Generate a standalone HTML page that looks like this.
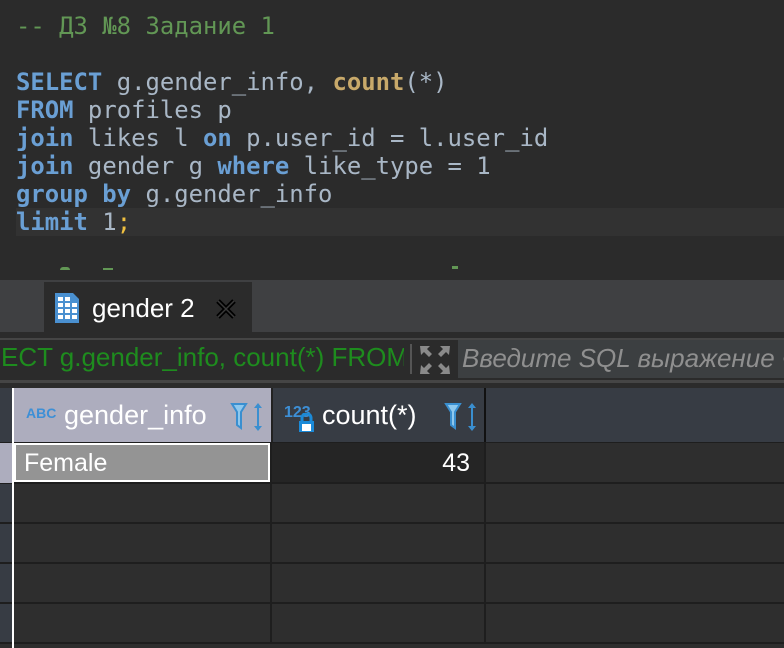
<!DOCTYPE html>
<html><head><meta charset="utf-8"><style>
*{margin:0;padding:0;box-sizing:border-box}
body{width:784px;height:648px;overflow:hidden;background:#2b2b2b;position:relative;font-family:"Liberation Sans","DejaVu Sans",sans-serif}
.abs{position:absolute}
.code{font-family:"DejaVu Sans Mono","Liberation Mono",monospace;font-size:23.9px;color:#a9b7c6;white-space:pre;left:16px;line-height:28px}
.k{color:#6a9fd4;font-weight:bold}
.c{color:#629755}
.f{color:#c8a96a;font-weight:bold}
.y{color:#f0c040}
</style></head><body>
<div class="abs" style="left:16px;top:208px;width:768px;height:28px;background:#323232"></div>
<div class="abs code" style="top:12px"><span class="c">-- ДЗ №8 Задание 1</span>

<span class="k">SELECT</span> g.gender_info, <span class="f">count</span>(*)
<span class="k">FROM</span> profiles p
<span class="k">join</span> likes l <span class="k">on</span> p.user_id = l.user_id
<span class="k">join</span> gender g <span class="k">where</span> like_type = 1
<span class="k">group by</span> g.gender_info
<span class="k">limit</span> 1<span class="y">;</span></div>
<div class="abs" style="left:60px;top:267px;width:10px;height:3px;background:#629755;border-radius:3px 3px 0 0"></div>
<div class="abs" style="left:103px;top:268px;width:10px;height:2px;background:#629755"></div>
<div class="abs" style="left:452px;top:266px;width:6px;height:3px;background:#629755"></div>
<!-- tab bar -->
<div class="abs" style="left:0;top:280px;width:784px;height:52px;background:#3f4042"></div>
<div class="abs" style="left:44px;top:282px;width:208px;height:50px;background:#2b2b2b"></div>
<svg class="abs" style="left:54px;top:292px" width="26" height="32" viewBox="0 0 26 32"><path d="M1 1h18l6 6v24H1z" fill="#4a90d0"/><g fill="#fff"><rect x="4" y="5" width="5" height="4"/><rect x="11" y="5" width="5" height="4"/><rect x="4" y="11" width="5" height="4"/><rect x="11" y="11" width="5" height="4"/><rect x="18" y="11" width="5" height="4"/><rect x="4" y="17" width="5" height="4"/><rect x="11" y="17" width="5" height="4"/><rect x="18" y="17" width="5" height="4"/><rect x="4" y="23" width="5" height="4"/><rect x="11" y="23" width="5" height="4"/><rect x="18" y="23" width="5" height="4"/></g></svg>
<div class="abs" style="left:92px;top:293px;font-size:26px;color:#fff">gender 2</div>
<svg class="abs" style="left:215px;top:298px" width="22" height="22" viewBox="0 0 22 22"><path d="M3 3l16 16M19 3L3 19" stroke="#000" stroke-width="5"/><path d="M3 3l16 16M19 3L3 19" stroke="#3a3a3a" stroke-width="1.5"/></svg>
<div class="abs" style="left:0;top:338px;width:784px;height:2px;background:#454545"></div>
<!-- filter bar -->
<div class="abs" style="left:0;top:342px;font-size:26px;color:#1e8c1e;white-space:nowrap;width:404px;overflow:hidden"><span style="margin-left:1px">ECT g.gender_info, count(*) FROM</span></div>
<div class="abs" style="left:410px;top:344px;width:2px;height:30px;background:#555"></div>
<svg class="abs" style="left:418px;top:344px" width="34" height="32" viewBox="0 0 34 32"><g fill="#8a8a8a"><path d="M2 2h10l-3 3 5 5-3 3-5-5-3 3z"/><path d="M32 2H22l3 3-5 5 3 3 5-5 3 3z"/><path d="M2 30h10l-3-3 5-5-3-3-5 5-3-3z"/><path d="M32 30H22l3-3-5-5 3-3 5 5 3-3z"/></g></svg>
<div class="abs" style="left:458px;top:340px;width:326px;height:38px;background:#3c3f41"></div>
<div class="abs" style="left:462px;top:343px;font-size:26px;color:#8f8f8f;font-style:italic;white-space:nowrap">Введите SQL выражение ч</div>
<div class="abs" style="left:0;top:380px;width:784px;height:3px;background:#454545"></div>
<!-- header -->
<div class="abs" style="left:0;top:388px;width:784px;height:54px;background:#373c44"></div>
<div class="abs" style="left:14px;top:388px;width:257px;height:54px;background:#adadbe"></div>
<div class="abs" style="left:26px;top:405px;font-size:14px;font-weight:bold;color:#3d8fd6">ABC</div>
<div class="abs" style="left:64px;top:400px;font-size:27px;color:#fff">gender_info</div>
<svg class="abs" style="left:230px;top:402px" width="36" height="30" viewBox="0 0 36 30"><path d="M2 2h14l-5 8v16l-4-3V10z" fill="#8ec8ee" stroke="#3a8fd0" stroke-width="2"/><path d="M28 1l-4 5h8zM28 29l-4-5h8z" fill="#3a8fd0"/><rect x="27" y="5" width="2" height="20" fill="#3a8fd0"/></svg>
<div class="abs" style="left:271px;top:388px;width:2px;height:54px;background:#222"></div>
<div class="abs" style="left:484px;top:388px;width:2px;height:54px;background:#111"></div>
<div class="abs" style="left:284px;top:404px;font-size:16px;font-weight:bold;color:#3d8fd6">123</div>
<svg class="abs" style="left:298px;top:413px" width="18" height="20" viewBox="0 0 18 20"><rect x="1" y="8" width="15" height="11" fill="#1b8ad8"/><path d="M4 9V5a4.5 4.5 0 019 0v4" stroke="#1b8ad8" stroke-width="3" fill="none"/><rect x="4" y="11" width="9" height="7" fill="#fff"/></svg>
<div class="abs" style="left:322px;top:400px;font-size:27px;color:#fff">count(*)</div>
<svg class="abs" style="left:444px;top:402px" width="36" height="30" viewBox="0 0 36 30"><path d="M2 2h14l-5 8v16l-4-3V10z" fill="#8ec8ee" stroke="#3a8fd0" stroke-width="2"/><path d="M28 1l-4 5h8zM28 29l-4-5h8z" fill="#3a8fd0"/><rect x="27" y="5" width="2" height="20" fill="#3a8fd0"/></svg>
<!-- rows -->
<div class="abs" style="left:0;top:442px;width:784px;height:206px;background:#1e1e1e"></div>
<div class="abs" style="left:0;top:443px;width:12px;height:40px;background:#adadbe"></div>
<div class="abs" style="left:14px;top:443px;width:256px;height:39px;background:#949494;border:2px solid #fff"></div>
<div class="abs" style="left:24px;top:449px;font-size:25px;color:#fff">Female</div>
<div class="abs" style="left:272px;top:443px;width:212px;height:39px;background:#252525"></div>
<div class="abs" style="left:390px;top:449px;width:80px;text-align:right;font-size:25px;color:#fff">43</div>
<div class="abs" style="left:486px;top:443px;width:298px;height:39px;background:#2e2e2e"></div>
<div class="abs" style="left:0;top:484px;width:12px;height:38px;background:#373c44"></div>
<div class="abs" style="left:14px;top:484px;width:256px;height:38px;background:#2e2e2e"></div>
<div class="abs" style="left:272px;top:484px;width:212px;height:38px;background:#2e2e2e"></div>
<div class="abs" style="left:486px;top:484px;width:298px;height:38px;background:#2e2e2e"></div>
<div class="abs" style="left:0;top:524px;width:12px;height:38px;background:#373c44"></div>
<div class="abs" style="left:14px;top:524px;width:256px;height:38px;background:#2e2e2e"></div>
<div class="abs" style="left:272px;top:524px;width:212px;height:38px;background:#2e2e2e"></div>
<div class="abs" style="left:486px;top:524px;width:298px;height:38px;background:#2e2e2e"></div>
<div class="abs" style="left:0;top:564px;width:12px;height:38px;background:#373c44"></div>
<div class="abs" style="left:14px;top:564px;width:256px;height:38px;background:#2e2e2e"></div>
<div class="abs" style="left:272px;top:564px;width:212px;height:38px;background:#2e2e2e"></div>
<div class="abs" style="left:486px;top:564px;width:298px;height:38px;background:#2e2e2e"></div>
<div class="abs" style="left:0;top:604px;width:12px;height:38px;background:#373c44"></div>
<div class="abs" style="left:14px;top:604px;width:256px;height:38px;background:#2e2e2e"></div>
<div class="abs" style="left:272px;top:604px;width:212px;height:38px;background:#2e2e2e"></div>
<div class="abs" style="left:486px;top:604px;width:298px;height:38px;background:#2e2e2e"></div>
<div class="abs" style="left:0;top:644px;width:784px;height:4px;background:#2e2e2e"></div>
<div class="abs" style="left:12px;top:388px;width:2px;height:260px;background:#fff"></div>
</body></html>
